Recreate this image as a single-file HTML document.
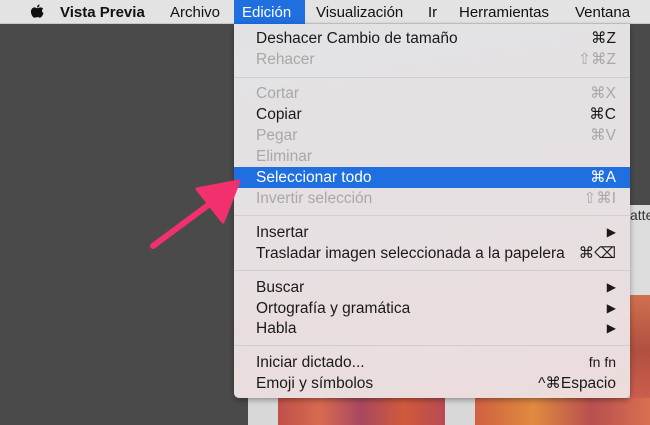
<!DOCTYPE html>
<html><head><meta charset="utf-8"><style>
*{margin:0;padding:0;box-sizing:border-box}
body{width:650px;height:425px;overflow:hidden;background:#4a4a4a;font-family:"Liberation Sans",sans-serif;position:relative}
.bar{position:absolute;left:0;top:0;width:650px;height:24px;background:#e4e3e4;border-bottom:1px solid #c8c8c8;font-size:15px;color:#111}
.bar span{position:absolute;top:4px}
.ed{position:absolute;left:234px;top:0;width:71px;height:24px;background:#1f6fe0}
.win{position:absolute;left:600px;top:205px;width:60px;height:220px;background:#dcdcdc}
.img1{position:absolute;left:278px;top:398px;width:167px;height:27px;background:linear-gradient(90deg,#c0504a,#d86a50,#a84860,#d05a3a,#b84a55)}
.img2{position:absolute;left:475px;top:398px;width:175px;height:27px;background:linear-gradient(90deg,#d06040,#e08a40,#b85050,#d87050)}
.img3{position:absolute;left:630px;top:295px;width:20px;height:110px;background:linear-gradient(180deg,#d07050,#b05040,#d06050)}
.strip{position:absolute;left:248px;top:398px;width:30px;height:27px;background:#d8d8d8}
.strip2{position:absolute;left:445px;top:398px;width:30px;height:27px;background:#d8d8d8}
.menu{position:absolute;left:234px;top:24px;width:396px;height:374px;background:linear-gradient(170deg,#e2e2e4 0%,#e6e0e2 50%,#ecdcdc 100%);border-radius:0 0 5px 5px;box-shadow:0 2px 6px rgba(0,0,0,.35);font-size:15.5px;color:#1a1a1a}
.r{position:absolute;left:0;width:396px;height:21px;line-height:21px}
.r .t{position:absolute;left:22px}
.r .k{position:absolute;right:14px}
.d{color:#a8a8a8}
.sel{background:#1f6fe0;color:#fff}
.sep{position:absolute;left:0;width:396px;height:1px;background:#cfcfcf}
</style></head><body>
<div class="win"><div style="position:absolute;left:30px;top:2px;font-size:14px;color:#333">atte</div></div>
<div class="img3"></div>
<div class="strip"></div><div class="img1"></div><div class="strip2"></div><div class="img2"></div>
<div class="bar">
<svg style="position:absolute;left:30px;top:4px" width="14" height="16" viewBox="0 0 14 16"><path d="M7 4.2C8 4.2 9.2 3.4 10.5 3.4 11.5 3.4 12.5 3.9 13.1 4.8 11.5 5.8 11.7 8.3 13.5 9.1 13 10.6 12 12.4 11 13.3 10.2 14 9.4 13.6 8.5 13.3 7.6 13 6.8 13 5.8 13.4 4.9 13.8 4.2 14 3.4 13.3 1.5 11.5 0.3 7.9 1.3 5.7 2 4.2 3.3 3.4 4.6 3.4 5.6 3.4 6.2 4.2 7 4.2Z M7 3.5C6.9 2 8.1 0.6 9.6 0.5 9.7 2 8.4 3.5 7 3.5Z" fill="#111"/></svg>
<span style="left:60px;font-weight:bold">Vista Previa</span>
<span style="left:170px">Archivo</span>
<div class="ed"></div>
<span style="left:242px;color:#fff">Edición</span>
<span style="left:316px">Visualización</span>
<span style="left:428px">Ir</span>
<span style="left:459px">Herramientas</span>
<span style="left:575px">Ventana</span>
</div>
<div class="menu">
<div class="r" style="top:4px"><span class="t">Deshacer Cambio de tamaño</span><span class="k">⌘Z</span></div>
<div class="r d" style="top:25px"><span class="t">Rehacer</span><span class="k">⇧⌘Z</span></div>
<div class="sep" style="top:53px"></div>
<div class="r d" style="top:59px"><span class="t">Cortar</span><span class="k">⌘X</span></div>
<div class="r" style="top:80px"><span class="t">Copiar</span><span class="k">⌘C</span></div>
<div class="r d" style="top:101px"><span class="t">Pegar</span><span class="k">⌘V</span></div>
<div class="r d" style="top:122px"><span class="t">Eliminar</span></div>
<div class="r sel" style="top:143px"><span class="t">Seleccionar todo</span><span class="k">⌘A</span></div>
<div class="r d" style="top:164px"><span class="t">Invertir selección</span><span class="k">⇧⌘I</span></div>
<div class="sep" style="top:191px"></div>
<div class="r" style="top:198px"><span class="t">Insertar</span><span class="k" style="font-size:12px">▶</span></div>
<div class="r" style="top:219px"><span class="t">Trasladar imagen seleccionada a la papelera</span><span class="k">⌘⌫</span></div>
<div class="sep" style="top:246px"></div>
<div class="r" style="top:253px"><span class="t">Buscar</span><span class="k" style="font-size:12px">▶</span></div>
<div class="r" style="top:274px"><span class="t">Ortografía y gramática</span><span class="k" style="font-size:12px">▶</span></div>
<div class="r" style="top:294px"><span class="t">Habla</span><span class="k" style="font-size:12px">▶</span></div>
<div class="sep" style="top:321px"></div>
<div class="r" style="top:328px"><span class="t">Iniciar dictado...</span><span class="k" style="font-size:14px">fn fn</span></div>
<div class="r" style="top:349px"><span class="t">Emoji y símbolos</span><span class="k">^⌘Espacio</span></div>
</div>
<svg style="position:absolute;left:0;top:0" width="650" height="425">
<line x1="153" y1="246" x2="215" y2="200" stroke="#f3306e" stroke-width="6" stroke-linecap="round"/>
<polygon points="239,181 197,189 223,222" fill="#f3306e" stroke="#f3306e" stroke-width="3" stroke-linejoin="round"/>
</svg>
</body></html>
